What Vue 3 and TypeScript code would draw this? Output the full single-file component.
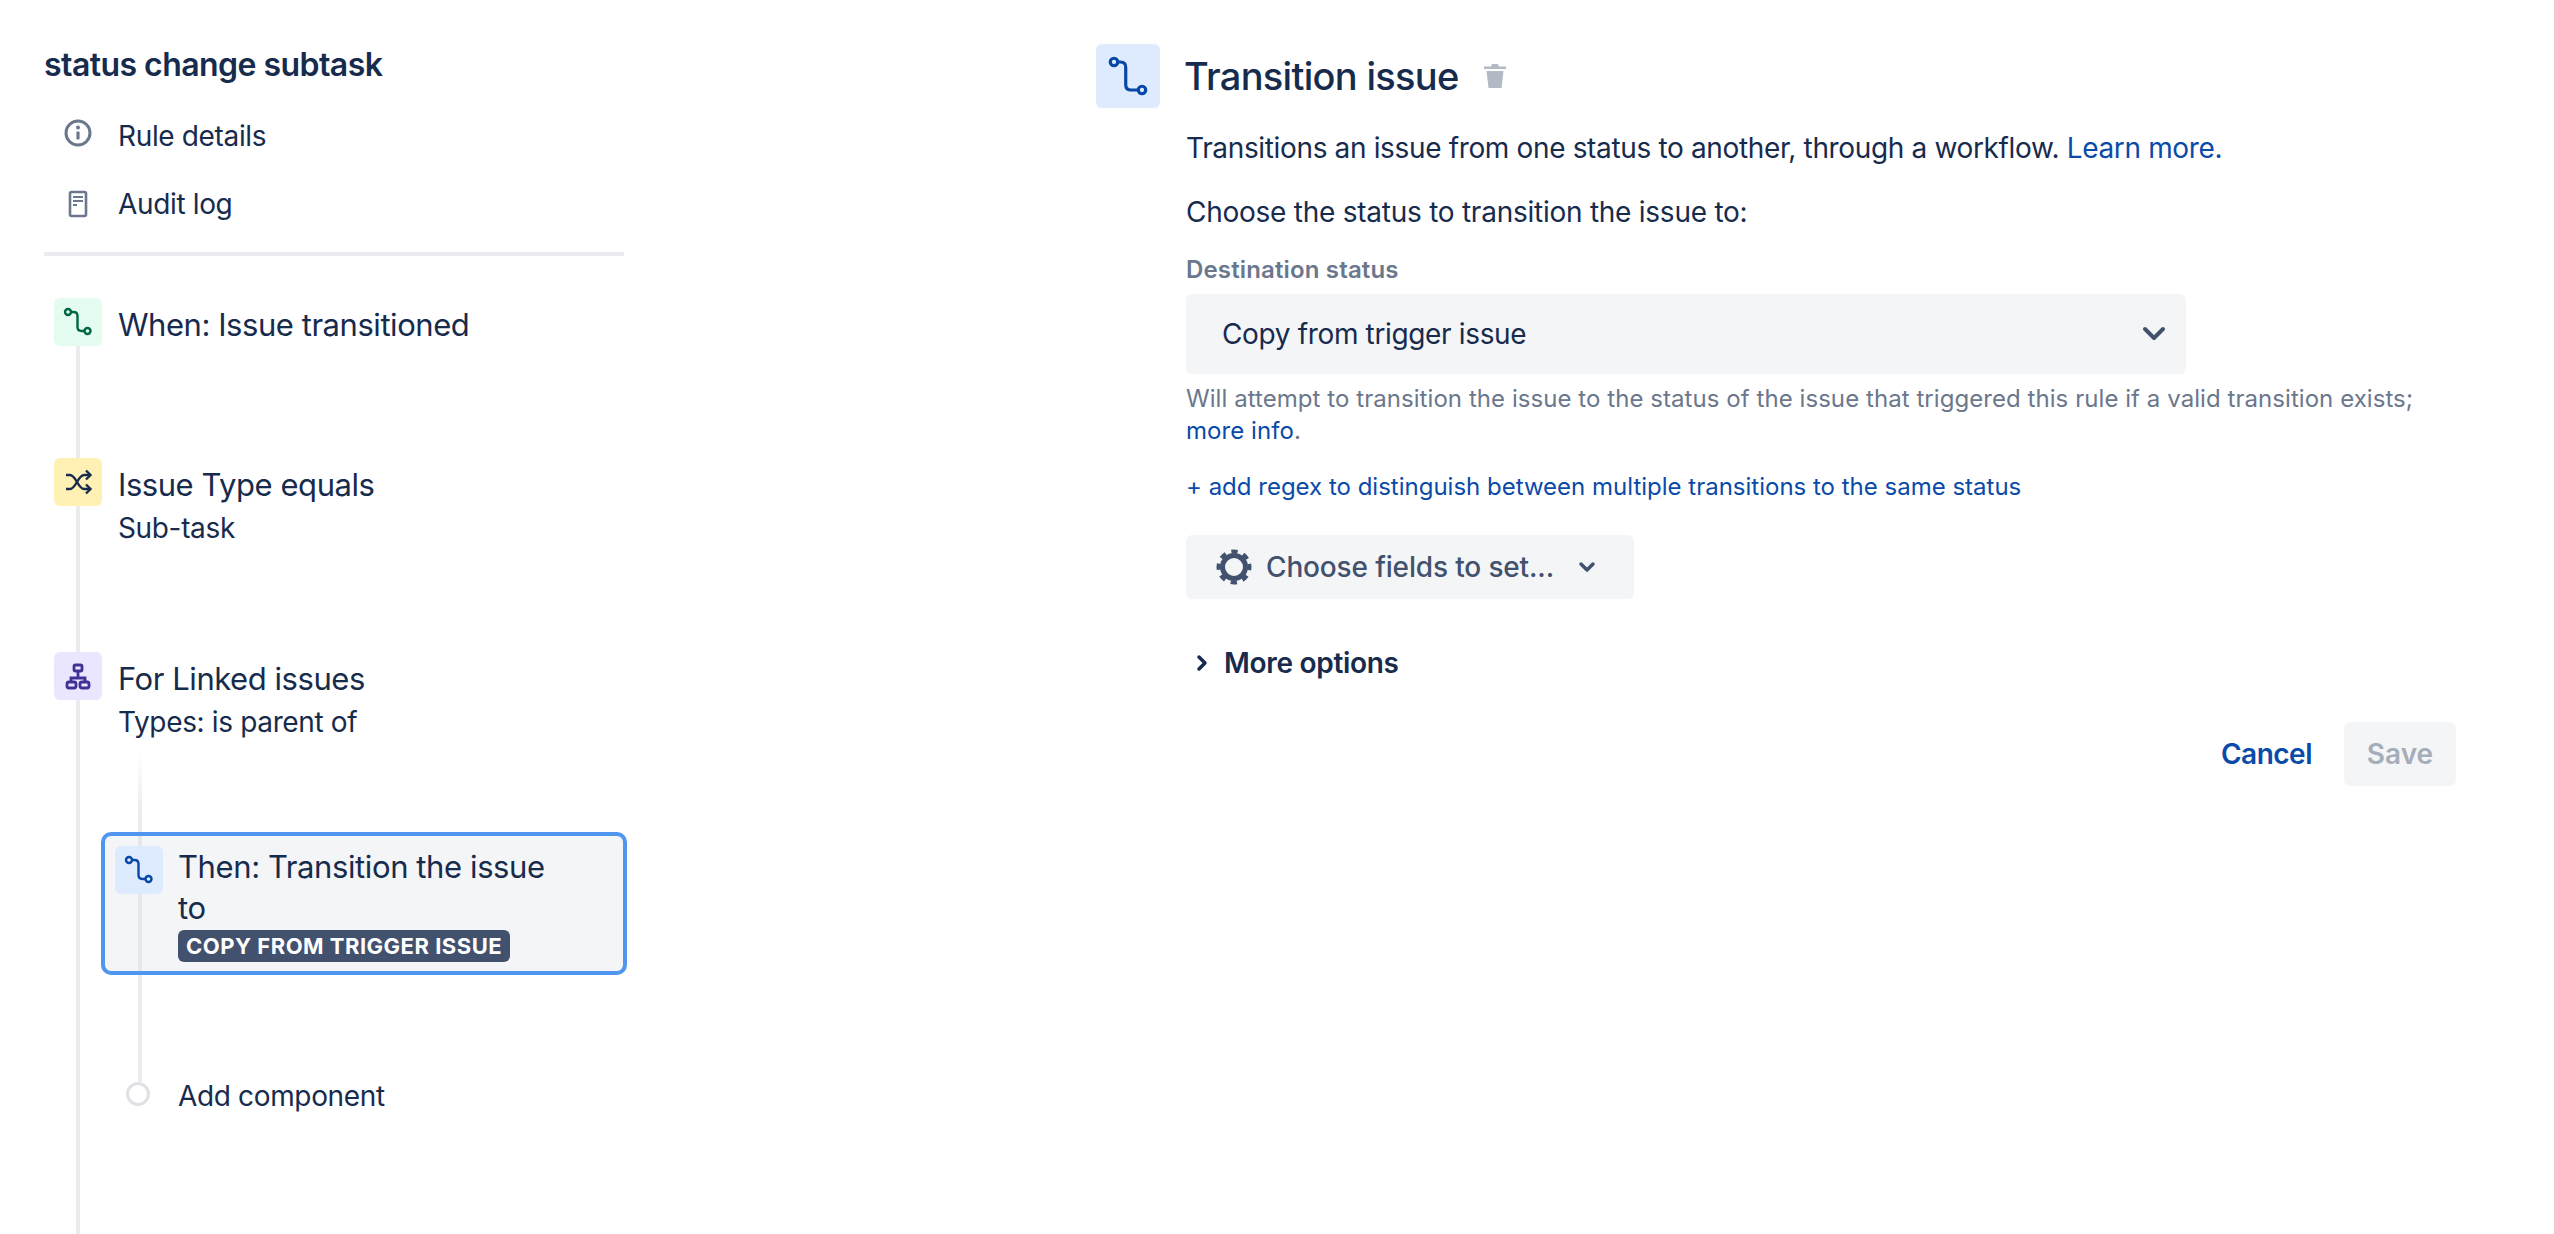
<template>
  <div class="page">
    <!-- 左侧规则列表 -->
    <aside class="sidebar">
      <h2 class="rule-name">status change subtask</h2>
      <div class="nav-row">
        <svg class="nav-icon" width="48" height="48" viewBox="0 0 48 48" fill="none">
          <circle cx="24" cy="21" r="12" stroke="#6b778c" stroke-width="3" />
          <circle cx="24" cy="15.5" r="2" fill="#6b778c" />
          <rect x="22.4" y="19.5" width="3.2" height="8" rx="1" fill="#6b778c" />
        </svg>
        <span>Rule details</span>
      </div>
      <div class="nav-row">
        <svg class="nav-icon" width="48" height="48" viewBox="0 0 48 48" fill="none">
          <rect x="16" y="12" width="16" height="24" rx="1.5" stroke="#6b778c" stroke-width="2.6" />
          <path d="M19 17h10M19 21h10M19 25h4" stroke="#6b778c" stroke-width="2.2" />
        </svg>
        <span>Audit log</span>
      </div>
      <div class="divider"></div>

      <div class="timeline">
        <div v-for="step in steps" :key="step.title" class="step" :class="step.cls">
          <div class="step-icon" :style="{ background: step.bg }">
            <svg v-if="step.icon === 'transition'" width="48" height="48" viewBox="0 0 48 48" fill="none" :stroke="step.fg" stroke-width="2.4">
              <circle cx="14" cy="14" r="3" />
              <circle cx="33.5" cy="33" r="3" />
              <path d="M17 14h2.5q4 0 4 4v11q0 4 4 4h3" />
            </svg>
            <svg v-else-if="step.icon === 'shuffle'" width="48" height="48" viewBox="0 0 48 48" fill="none" :stroke="step.fg" stroke-width="2.4">
              <path d="M12 17h4c6 0 8 14 14 14h6" />
              <path d="M12 31h4c6 0 8-14 14-14h6" />
              <path d="M32 12.5l4.500 4.500-4.500 4.500M32 26.500l4.500 4.500-4.500 4.500" />
            </svg>
            <svg v-else width="48" height="48" viewBox="0 0 48 48" fill="none" :stroke="step.fg" stroke-width="2.800">
              <rect x="20" y="13" width="8" height="6" rx="1.500" />
              <path d="M24 19v7M17 30v-4h14v4" />
              <rect x="13" y="30" width="9" height="6" rx="2" />
              <rect x="26" y="30" width="9" height="6" rx="2" />
            </svg>
          </div>
          <div class="step-text">
            <div class="step-title">{{ step.title }}</div>
            <div v-if="step.sub" class="step-sub">{{ step.sub }}</div>
          </div>
        </div>

        <div class="nested">
          <div class="card">
            <div class="step-icon card-icon">
              <svg width="48" height="48" viewBox="0 0 48 48" fill="none" stroke="#0747a6" stroke-width="2.4">
                <circle cx="14" cy="14" r="3" />
                <circle cx="33.5" cy="33" r="3" />
                <path d="M17 14h2.500q4 0 4 4v11q0 4 4 4h3" />
              </svg>
            </div>
            <div class="card-text">
              <div class="card-title">Then: Transition the issue to</div>
              <span class="lozenge">COPY FROM TRIGGER ISSUE</span>
            </div>
          </div>
          <div class="add-row">
            <span class="add-dot"></span>
            <span>Add component</span>
          </div>
        </div>
      </div>
    </aside>

    <!-- 右侧配置面板 -->
    <main class="panel">
      <header class="panel-head">
        <div class="panel-icon">
          <svg width="64" height="64" viewBox="0 0 48 48" fill="none" stroke="#0747a6" stroke-width="2.400">
            <circle cx="13.500" cy="13.500" r="2.800" />
            <circle cx="34.500" cy="34.500" r="2.800" />
            <path d="M16.300 13.500h2q4 0 4 4v13q0 4 4 4h5.400" />
          </svg>
        </div>
        <h1>Transition issue</h1>
        <svg class="trash" width="24" height="24" viewBox="0 0 24 24" fill="#b3bac5">
          <path d="M9 0h6l1 2.500h7V5H1V2.500h7z" />
          <path d="M3.500 7h17L18.500 24h-13z" />
        </svg>
      </header>

      <div class="panel-body">
        <p class="intro">Transitions an issue from one status to another, through a workflow. <a>Learn more.</a></p>
        <p class="choose">Choose the status to transition the issue to:</p>
        <label class="field-label">Destination status</label>
        <div class="select">
          <span>Copy from trigger issue</span>
          <svg width="24" height="16" viewBox="0 0 24 16" fill="none" stroke="#42526e" stroke-width="4" stroke-linecap="round" stroke-linejoin="round">
            <path d="M3 3l9 9 9-9" />
          </svg>
        </div>
        <p class="help">Will attempt to transition the issue to the status of the issue that triggered this rule if a valid transition exists; <a>more info</a>.</p>
        <a class="regex">+ add regex to distinguish between multiple transitions to the same status</a>
        <button class="fields-btn">
          <svg width="36" height="36" viewBox="0 0 36 36" fill="none" stroke="#42526e">
            <circle cx="18" cy="18" r="11.500" stroke-width="5" />
            <circle cx="18" cy="18" r="15.500" stroke-width="4" stroke-dasharray="6.170 6" transform="rotate(-11.300 18 18)" />
          </svg>
          <span>Choose fields to set...</span>
          <svg width="18" height="12" viewBox="0 0 18 12" fill="none" stroke="#42526e" stroke-width="3.500" stroke-linecap="round" stroke-linejoin="round">
            <path d="M3 3l6 6 6-6" />
          </svg>
        </button>
        <div class="more">
          <svg width="12" height="18" viewBox="0 0 12 18" fill="none" stroke="#172b4d" stroke-width="3.500" stroke-linecap="round" stroke-linejoin="round">
            <path d="M3 3l6 6-6 6" />
          </svg>
          <span>More options</span>
        </div>
        <footer class="actions">
          <a class="cancel">Cancel</a>
          <button class="save" disabled>Save</button>
        </footer>
      </div>
    </main>
  </div>
</template>

<script setup lang="ts">
interface Step {
  title: string
  sub?: string
  icon: 'transition' | 'shuffle' | 'tree'
  bg: string
  fg: string
  cls: string
}

const steps: Step[] = [
  { title: 'When: Issue transitioned', icon: 'transition', bg: '#e3fcef', fg: '#006644', cls: 'step-when' },
  { title: 'Issue Type equals', sub: 'Sub-task', icon: 'shuffle', bg: '#fff0b3', fg: '#172b4d', cls: 'step-if' },
  { title: 'For Linked issues', sub: 'Types: is parent of', icon: 'tree', bg: '#eae6ff', fg: '#403294', cls: 'step-for' }
]
</script>

<style>
html,
body {
  margin: 0;
  background: #fff;
}
</style>

<style scoped>
.page {
  display: flex;
  height: 1234px;
  overflow: hidden;
  font-family: Inter, "Liberation Sans", sans-serif;
  font-size: 28px;
  line-height: 40px;
  letter-spacing: -0.35px;
  color: #172b4d;
}

.sidebar {
  flex: 0 0 580px;
  margin-left: 44px;
  padding-top: 45px;
}

.rule-name {
  margin: 0 0 17px;
  font-size: 32px;
  line-height: 40px;
  font-weight: 600;
  letter-spacing: -0.55px;
}

.nav-row {
  display: flex;
  align-items: center;
  height: 68px;
  padding-left: 10px;
  gap: 16px;
}

.nav-icon {
  flex: none;
}

.divider {
  width: 580px;
  height: 4px;
  margin-top: 14px;
  background: #ebecf0;
}

.timeline {
  position: relative;
  height: 978px;
  padding-top: 42px;
  box-sizing: border-box;
}

.timeline::before {
  content: "";
  position: absolute;
  left: 32px;
  top: 42px;
  bottom: 0;
  width: 4px;
  background: #ebecf0;
}

.step {
  position: relative;
  display: flex;
  gap: 16px;
  padding-left: 10px;
}

.step-when {
  margin-bottom: 112px;
}

.step-if {
  margin-bottom: 104px;
}

.step-icon {
  position: relative;
  z-index: 1;
  flex: none;
  width: 48px;
  height: 48px;
  border-radius: 6px;
}

.step-icon svg {
  display: block;
}

.step-text {
  padding-top: 7px;
}

.step-title {
  font-size: 31px;
  letter-spacing: -0.45px;
}

.step-sub {
  margin-top: 3px;
}

.nested {
  position: relative;
  margin: 90px 0 0 57px;
}

.nested::before {
  content: "";
  position: absolute;
  left: 37px;
  top: -79px;
  height: 329px;
  width: 4px;
  background: linear-gradient(#fff, #ebecf0 60px);
}

.card {
  position: relative;
  display: flex;
  gap: 15px;
  width: 526px;
  height: 143px;
  box-sizing: border-box;
  padding: 10px;
  border: 4px solid #5096ee;
  border-radius: 10px;
  background: #f4f5f6;
}

.card::before {
  content: "";
  position: absolute;
  left: 33px;
  top: 0;
  bottom: 0;
  width: 4px;
  background: #e6e7ea;
}

.card-icon {
  background: #deebff;
}

.card-text {
  position: relative;
  width: 385px;
}

.card-title {
  font-size: 31px;
  line-height: 41px;
  letter-spacing: -0.4px;
}

.lozenge {
  display: inline-block;
  margin-top: 2px;
  padding: 0 8px;
  height: 32px;
  border-radius: 6px;
  background: #42526e;
  color: #fff;
  font-size: 22px;
  line-height: 32px;
  font-weight: 700;
  letter-spacing: 0.5px;
  vertical-align: top;
}

.add-row {
  position: relative;
  display: flex;
  align-items: center;
  gap: 28px;
  margin: 101px 0 0 25px;
}

.add-dot {
  width: 24px;
  height: 24px;
  margin-bottom: 4px;
  box-sizing: border-box;
  border: 3px solid #dfe1e6;
  border-radius: 50%;
  background: #fff;
}

.panel {
  flex: 0 0 1360px;
  margin-left: 469px;
  padding-top: 44px;
}

.panel-head {
  display: flex;
  align-items: center;
}

.panel-icon {
  width: 64px;
  height: 64px;
  border-radius: 6px;
  background: #deebff;
}

.panel-icon svg {
  display: block;
}

.panel-head h1 {
  margin: 0 0 0 24px;
  font-size: 38px;
  line-height: 48px;
  font-weight: 500;
  letter-spacing: -0.7px;
}

.trash {
  margin-left: 24px;
}

.panel-body {
  margin-left: 90px;
}

.intro {
  margin: 20px 0 0;
}

.choose {
  margin: 24px 0 0;
  letter-spacing: -0.25px;
}

a {
  color: #0a4aa8;
}

.field-label {
  display: block;
  margin-top: 22px;
  font-size: 24px;
  line-height: 32px;
  font-weight: 600;
  letter-spacing: 0.15px;
  color: #6b778c;
}

.select {
  display: flex;
  align-items: center;
  justify-content: space-between;
  box-sizing: border-box;
  width: 1000px;
  height: 80px;
  margin-top: 8px;
  padding: 0 20px 0 36px;
  border-radius: 6px;
  background: #f4f5f7;
}

.help {
  margin: 9px 0 0;
  font-size: 24px;
  line-height: 32px;
  letter-spacing: 0.06px;
  color: #6b778c;
}

.regex {
  display: block;
  margin-top: 23px;
  font-size: 24px;
  line-height: 33px;
  letter-spacing: 0;
}

.fields-btn {
  display: flex;
  align-items: center;
  gap: 14px;
  height: 64px;
  margin-top: 32px;
  padding: 0 38px 0 30px;
  border: 0;
  border-radius: 6px;
  background: #f4f5f7;
  color: #42526e;
  font: 500 28px/40px Inter, "Liberation Sans", sans-serif;
  letter-spacing: -0.15px;
}

.fields-btn svg:last-child {
  margin-left: 10px;
}

.more {
  display: flex;
  align-items: center;
  gap: 16px;
  margin: 44px 0 0 10px;
  font-weight: 600;
  letter-spacing: -0.3px;
}

.actions {
  display: flex;
  align-items: center;
  justify-content: flex-end;
  gap: 32px;
  margin-top: 39px;
}

.cancel {
  font-weight: 600;
  letter-spacing: -0.5px;
}

.save {
  width: 112px;
  height: 64px;
  border: 0;
  border-radius: 6px;
  background: #f4f5f7;
  color: #a5adba;
  font: 600 28px/40px Inter, "Liberation Sans", sans-serif;
}
</style>
